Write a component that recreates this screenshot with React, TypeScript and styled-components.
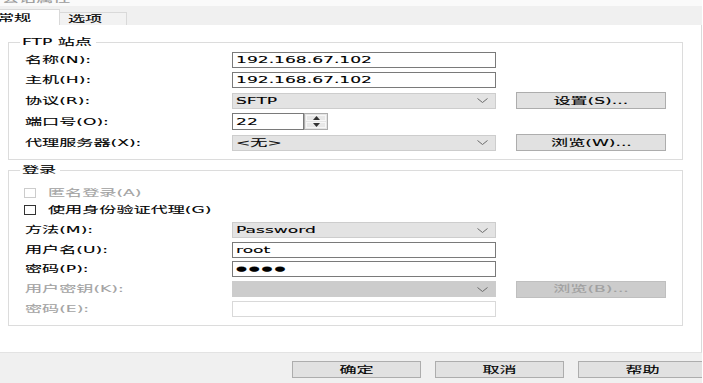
import styled, { createGlobalStyle } from "styled-components";

const GlobalStyle = createGlobalStyle`
  * { box-sizing: border-box; }
  html, body {
    margin: 0;
    padding: 0;
    background: #ffffff;
    overflow: hidden;
  }
  body {
    font-family: "DejaVu Sans", "Noto Sans CJK SC", sans-serif;
    font-size: 9.5px;
    line-height: 12px;
    color: #000000;
  }
`;

function Chevron() {
  return (
    <svg width="11" height="5" viewBox="0 0 11 5">
      <polyline points="0.5,0.5 5.5,4.5 10.5,0.5" fill="none" stroke="#6b6b6b" strokeWidth="1" />
    </svg>
  );
}

function Arrow({ up }: { up?: boolean }) {
  return (
    <svg width="7" height="4" viewBox="0 0 7 4">
      <polygon points={up ? "0,4 7,4 3.5,0" : "0,0 7,0 3.5,4"} fill="#333" />
    </svg>
  );
}

export default function App() {
  return (
    <>
      <GlobalStyle />
      <Window>
        <TitleStrip>
          <TitleText><Txt>会话属性</Txt></TitleText>
        </TitleStrip>

        <TabBar>
          <Tab $active $w={70} $pl={6}><Txt>常规</Txt></Tab>
          <Tab $w={67} $pl={8}><Txt>选项</Txt></Tab>
        </TabBar>

        <Panel>
          <Group>
            <Legend $w={76}><Txt>FTP 站点</Txt></Legend>
            <FormGrid $gap={4}>
              <Label><Txt>名称(N):</Txt></Label>
              <TextBox><Txt>192.168.67.102</Txt></TextBox>
              <span />

              <Label><Txt>主机(H):</Txt></Label>
              <TextBox><Txt>192.168.67.102</Txt></TextBox>
              <span />

              <Label><Txt>协议(R):</Txt></Label>
              <Select><Txt>SFTP</Txt><Chevron /></Select>
              <Button><Txt $center>设置(S)...</Txt></Button>

              <Label><Txt>端口号(O):</Txt></Label>
              <Port>
                <PortInput><Txt>22</Txt></PortInput>
                <Spinner>
                  <SpinBtn><Arrow up /></SpinBtn>
                  <SpinBtn><Arrow /></SpinBtn>
                </Spinner>
              </Port>
              <span />

              <Label><Txt>代理服务器(X):</Txt></Label>
              <Select><Txt>&lt;无&gt;</Txt><Chevron /></Select>
              <Button><Txt $center>浏览(W)...</Txt></Button>
            </FormGrid>
          </Group>

          <Group>
            <Legend $w={40}><Txt>登录</Txt></Legend>
            <CheckRow $top={7}>
              <Box $disabled />
              <Label $disabled><Txt>匿名登录(A)</Txt></Label>
            </CheckRow>
            <CheckRow $top={5}>
              <Box />
              <Label><Txt>使用身份验证代理(G)</Txt></Label>
            </CheckRow>
            <FormGrid $gap={3.5} $top={6}>
              <Label><Txt>方法(M):</Txt></Label>
              <Select><Txt>Password</Txt><Chevron /></Select>
              <span />

              <Label><Txt>用户名(U):</Txt></Label>
              <TextBox><Txt>root</Txt></TextBox>
              <span />

              <Label><Txt>密码(P):</Txt></Label>
              <TextBox><Dots>●●●●</Dots></TextBox>
              <span />

              <Label $disabled><Txt>用户密钥(K):</Txt></Label>
              <Select $disabled><span /><Chevron /></Select>
              <Button disabled><Txt $center>浏览(B)...</Txt></Button>

              <Label $disabled><Txt>密码(E):</Txt></Label>
              <TextBox $disabled />
              <span />
            </FormGrid>
          </Group>
        </Panel>

        <Footer>
          <FooterButton><Txt $center>确定</Txt></FooterButton>
          <FooterButton><Txt $center>取消</Txt></FooterButton>
          <FooterButton><Txt $center>帮助</Txt></FooterButton>
        </Footer>
      </Window>
    </>
  );
}

const Txt = styled.span<{ $center?: boolean }>`
  display: inline-block;
  white-space: nowrap;
  -webkit-text-stroke: 0.1px currentColor;
  transform: scaleX(1.8);
  transform-origin: ${(p) => (p.$center ? "50% 50%" : "0 50%")};
`;

const Dots = styled(Txt)`
  font-size: 7px;
  letter-spacing: 1px;
`;

const Window = styled.div`
  width: 702px;
  height: 383px;
  display: flex;
  flex-direction: column;
  background: #f0f0f0;
  overflow: hidden;
`;

const TitleStrip = styled.div`
  height: 6px;
  background: #fafafa;
  overflow: hidden;
  padding-left: 2px;
  color: #9a9a9a;
`;

const TitleText = styled.div`
  margin-top: -7px;
`;

const TabBar = styled.div`
  height: 19px;
  display: flex;
  align-items: flex-end;
  margin-left: -10px;
`;

const Tab = styled.div<{ $active?: boolean; $w: number; $pl: number }>`
  width: ${(p) => p.$w}px;
  height: ${(p) => (p.$active ? 16 : 13)}px;
  padding-left: ${(p) => p.$pl}px;
  background: ${(p) => (p.$active ? "#ffffff" : "#f2f2f2")};
  border: 1px solid #d9d9d9;
  border-bottom: none;
  ${(p) => (p.$active ? "" : "border-left: none;")}
  display: flex;
  align-items: center;
`;

const Panel = styled.div`
  flex: 1;
  background: #ffffff;
  border-right: 1px solid #dadada;
  border-bottom: 1px solid #e3e3e3;
  padding: 11px 0 0 8px;
`;

const Group = styled.fieldset`
  width: 675px;
  min-width: 0;
  margin: 0 0 4px;
  padding: 4px 0 8px 16px;
  border: 1px solid #dcdcdc;
`;

const Legend = styled.legend<{ $w: number }>`
  width: ${(p) => p.$w}px;
  height: 12px;
  margin-left: -5px;
  padding: 0 2px;
  line-height: 12px;
`;

const FormGrid = styled.div<{ $gap: number; $top?: number }>`
  display: grid;
  grid-template-columns: 187px 264px 150px;
  column-gap: 20px;
  row-gap: ${(p) => p.$gap}px;
  align-items: center;
  margin-top: ${(p) => p.$top ?? 0}px;
`;

const Label = styled.div<{ $disabled?: boolean }>`
  color: ${(p) => (p.$disabled ? "#a3a3a3" : "#000000")};
  white-space: nowrap;
`;

const TextBox = styled.div<{ $disabled?: boolean }>`
  height: 16px;
  padding: 0 3px;
  background: #ffffff;
  border: 1px solid ${(p) => (p.$disabled ? "#d9d9d9" : "#7a7a7a")};
  display: flex;
  align-items: center;
`;

const Select = styled.div<{ $disabled?: boolean }>`
  height: 16px;
  padding: 0 7px 0 3px;
  background: ${(p) => (p.$disabled ? "#cccccc" : "#e3e3e3")};
  border: 1px solid ${(p) => (p.$disabled ? "#cccccc" : "#cdcdcd")};
  display: flex;
  align-items: center;
  justify-content: space-between;
`;

const Button = styled.button`
  width: 150px;
  height: 17px;
  padding: 0;
  font: inherit;
  color: #000000;
  background: #e1e1e1;
  border: 1px solid #adadad;
  display: flex;
  align-items: center;
  justify-content: center;

  &:disabled {
    color: #a0a0a0;
    background: #cccccc;
    border-color: #bfbfbf;
  }
`;

const Port = styled.div`
  display: flex;
  height: 17px;
`;

const PortInput = styled(TextBox)`
  width: 72px;
  height: 17px;
`;

const Spinner = styled.div`
  width: 24px;
  display: flex;
  flex-direction: column;
  border: 1px solid #adadad;
  background: #e5e5e5;
  padding: 1px;
  gap: 1px;
`;

const SpinBtn = styled.div`
  flex: 1;
  background: #e8e8e8;
  border: 1px solid #f7f7f7;
  display: flex;
  align-items: center;
  justify-content: center;
`;

const CheckRow = styled.div<{ $top: number }>`
  display: flex;
  align-items: center;
  gap: 12px;
  height: 12px;
  margin-top: ${(p) => p.$top}px;
  margin-left: -1px;
`;

const Box = styled.div<{ $disabled?: boolean }>`
  flex: none;
  width: 12px;
  height: 10px;
  background: #ffffff;
  border: 1px solid ${(p) => (p.$disabled ? "#cccccc" : "#333333")};
`;

const Footer = styled.div`
  height: 30px;
  display: flex;
  justify-content: flex-end;
  gap: 14px;
  padding-top: 8px;
  margin-right: -5px;
`;

const FooterButton = styled(Button)`
  width: 129px;
`;
